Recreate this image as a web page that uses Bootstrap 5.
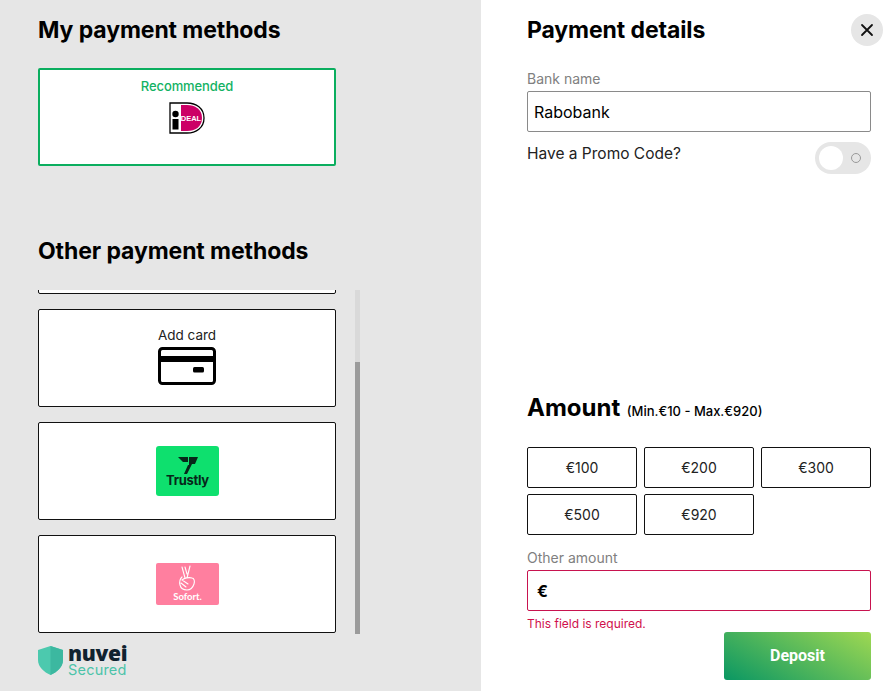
<!DOCTYPE html>
<html lang="en">
<head>
    <meta charset="UTF-8">
    <meta name="viewport" content="width=device-width, initial-scale=1.0">
    <title>Payment</title>
    <link href="https://cdn.jsdelivr.net/npm/bootstrap@5.3.0/dist/css/bootstrap.min.css" rel="stylesheet">
    <style>
        html, body { height: 691px; overflow: hidden; }
        body { font-family: Inter, "Liberation Sans", sans-serif; color: #000; background: #fff; }
        .pay-shell { height: 691px; }
        .left-pane { width: 481px; background: #e6e6e6; padding: 14px 0 0 38px; }
        .right-pane { width: 414px; padding: 14px 24px 0 46px; }
        .pane-title { font-size: 23px; line-height: 32px; font-weight: 700; margin: 0; letter-spacing: -.1px; }
        .method-box { width: 298px; height: 98px; background: #fff; border: 1px solid #111; border-radius: 2px; flex: none; }
        .method-box.picked { border: 2px solid #0bae5f; margin-top: 22px; }
        .picked-label { color: #13b264; font-size: 13px; font-weight: 500; line-height: 16px; margin-top: 8px; letter-spacing: -.1px; }
        .other-title { margin-top: 69px; }
        .scroll-zone { height: 344px; margin-top: 23px; width: 322px; }
        .scroll-list { width: 298px; height: 344px; overflow: hidden; gap: 15px; }
        .scroll-list .cut-off { margin-top: -94px; }
        .scroll-track { width: 5px; height: 344px; background: #d9d9d9; padding-top: 72px; }
        .scroll-thumb { height: 272px; background: #9b9b9b; }
        .add-label { font-size: 13.5px; line-height: 16px; color: #222; margin-top: 17px; }
        .nuvei-row { margin-top: 12px; gap: 5px; }
        .nuvei-text { line-height: 1; }
        .nuvei-name { font-family: "Open Sans", sans-serif; font-size: 21px; font-weight: 800; color: #10222f; line-height: 15px; letter-spacing: -.3px; }
        .nuvei-sub { font-size: 14.5px; color: #4cc3a9; line-height: 15px; margin-top: 1px; letter-spacing: .2px; }
        .close-btn { width: 32px; height: 32px; background: #e6e6e6; border: 0; border-radius: 50%; margin-right: -12px; padding: 0; }
        .field-label { color: #808080; font-size: 14px; line-height: 17px; margin: 0 0 4px; }
        .form-control.pay-input { height: 41px; border: 1px solid #8a8a8a; border-radius: 2px; padding: 0 6px; font-size: 16px; color: #000; }
        .promo-row { margin-top: 10px; }
        .promo-text { font-size: 15.5px; line-height: 24px; color: #222; }
        .promo-switch { width: 56px; height: 32px; background: #e6e6e6; border-radius: 16px; padding: 4px; }
        .switch-knob { width: 24px; height: 24px; border-radius: 50%; background: #fff; }
        .switch-dot { width: 10px; height: 10px; border: 1px solid #999; border-radius: 50%; margin-right: 6px; }
        .amount-head { margin-top: 218px; line-height: 32px; }
        .amount-title { font-size: 24px; font-weight: 700; }
        .amount-range { font-size: 13px; font-weight: 500; margin-left: 2px; }
        .amount-grid { display: grid; grid-template-columns: repeat(3, 110px); column-gap: 7px; row-gap: 6px; margin-top: 20px; }
        .btn.amount-btn { height: 41px; padding: 0; border: 1px solid #111; border-radius: 2px; font-size: 14px; color: #222; background: #fff; }
        .other-label { margin-top: 14px; }
        .form-control.error-input { border-color: #c8134f; font-weight: 700; padding-left: 9px; }
        .error-note { color: #d0104c; font-size: 12px; line-height: 14px; margin-top: 6px; }
        .btn.deposit-btn { width: 147px; height: 48px; margin-top: 1px; border: 0; border-radius: 3px; color: #fff; font-family: Roboto, sans-serif; font-weight: 700; font-size: 16px; background: linear-gradient(30deg, #0a9763, #9fd852); }
    </style>
</head>
<body>
    <div class="pay-shell d-flex">
        <div class="left-pane">
            <h2 class="pane-title">My payment methods</h2>
            <div class="method-box picked d-flex flex-column align-items-center">
                <div class="picked-label">Recommended</div>
                <svg class="mt-2" width="36" height="32" viewBox="0 0 36 32">
                    <path d="M1 1H18C27 1 35 6 35 16S27 31 18 31H1Z" fill="#fff" stroke="#000" stroke-width="1.3"/>
                    <path d="M12 3H18C26 3 33 7 33 16S26 29 18 29H12Z" fill="#cc0066"/>
                    <circle cx="6.500" cy="12" r="3.200" fill="#000"/>
                    <rect x="3.500" y="17" width="6" height="10.500" fill="#000"/>
                    <text x="22" y="18.500" text-anchor="middle" font-family="Liberation Sans" font-weight="700" font-size="7.500" fill="#fff">DEAL</text>
                </svg>
            </div>
            <h2 class="pane-title other-title">Other payment methods</h2>
            <div class="scroll-zone d-flex justify-content-between">
                <div class="scroll-list d-flex flex-column">
                    <div class="method-box cut-off"></div>
                    <div class="method-box d-flex flex-column align-items-center">
                        <div class="add-label">Add card</div>
                        <svg class="mt-1" width="58" height="38" viewBox="0 0 58 38">
                            <rect x="1.500" y="1.500" width="55" height="35" rx="3" fill="#fff" stroke="#000" stroke-width="3"/>
                            <rect x="2" y="9" width="54" height="6" fill="#000"/>
                            <rect x="35" y="20" width="11" height="5.500" rx="1.500" fill="#000"/>
                        </svg>
                    </div>
                    <div class="method-box d-flex align-items-center justify-content-center">
                        <svg width="63" height="50" viewBox="0 0 63 50">
                            <rect width="63" height="50" rx="3" fill="#0ee06e"/>
                            <path d="M22 11H32V16H27Z M33 11H42L39 18H36L31 28H28L32 19H33Z" fill="#07271a"/>
                            <text x="31.500" y="39" text-anchor="middle" font-family="Inter" font-weight="700" font-size="13" letter-spacing="-.3" fill="#07271a">Trustly</text>
                        </svg>
                    </div>
                    <div class="method-box d-flex align-items-center justify-content-center">
                        <svg width="63" height="42" viewBox="0 0 63 42">
                            <rect width="63" height="42" rx="2" fill="#ff7f9f"/>
                            <path d="M26 4L29 15 M34 3L31 15 M29 4L31 11 M26 14C24 16 23 18 24 22C25 26 28 27 31 27C35 27 37 24 38 21C39 18 38 15 36 15C33 14 28 15 26 17L32 21M25 20L30 24" fill="none" stroke="#fff" stroke-width="1.100" stroke-linecap="round"/>
                            <text x="31.500" y="37" text-anchor="middle" font-family="Lato" font-weight="700" font-size="9.500" fill="#fff">Sofort.</text>
                        </svg>
                    </div>
                </div>
                <div class="scroll-track">
                    <div class="scroll-thumb"></div>
                </div>
            </div>
            <div class="nuvei-row d-flex align-items-start">
                <svg width="25" height="29" viewBox="0 0 25 29">
                    <path d="M12.500 0L25 4V14C25 21 19 26 12.500 29C6 26 0 21 0 14V4Z" fill="#4cc9ae"/>
                    <path d="M12.500 0L25 4V14C25 21 19 26 12.500 29Z" fill="#3cb8a0"/>
                </svg>
                <div class="nuvei-text">
                    <div class="nuvei-name">nuvei</div>
                    <div class="nuvei-sub">Secured</div>
                </div>
            </div>
        </div>
        <div class="right-pane d-flex flex-column">
            <div class="d-flex justify-content-between align-items-center">
                <h2 class="pane-title">Payment details</h2>
                <button class="close-btn d-flex align-items-center justify-content-center" type="button" aria-label="Close">
                    <svg width="14" height="14" viewBox="0 0 14 14"><path d="M2 2L12 12M12 2L2 12" stroke="#111" stroke-width="1.800" stroke-linecap="round"/></svg>
                </button>
            </div>
            <div class="mt-4">
                <div class="field-label">Bank name</div>
                <input class="form-control pay-input" type="text" value="Rabobank">
            </div>
            <div class="promo-row d-flex justify-content-between align-items-start">
                <span class="promo-text">Have a Promo Code?</span>
                <div class="promo-switch d-flex justify-content-between align-items-center">
                    <div class="switch-knob"></div>
                    <div class="switch-dot"></div>
                </div>
            </div>
            <div class="amount-head">
                <span class="amount-title">Amount</span>
                <span class="amount-range">(Min.€10 - Max.€920)</span>
            </div>
            <div class="amount-grid">
                <button class="btn amount-btn" type="button">€100</button>
                <button class="btn amount-btn" type="button">€200</button>
                <button class="btn amount-btn" type="button">€300</button>
                <button class="btn amount-btn" type="button">€500</button>
                <button class="btn amount-btn" type="button">€920</button>
            </div>
            <div class="field-label other-label">Other amount</div>
            <input class="form-control pay-input error-input" type="text" value="€">
            <div class="error-note">This field is required.</div>
            <div class="d-flex justify-content-end">
                <button class="btn deposit-btn" type="button">Deposit</button>
            </div>
        </div>
    </div>
    <script src="https://cdn.jsdelivr.net/npm/bootstrap@5.3.0/dist/js/bootstrap.bundle.min.js"></script>
</body>
</html>
